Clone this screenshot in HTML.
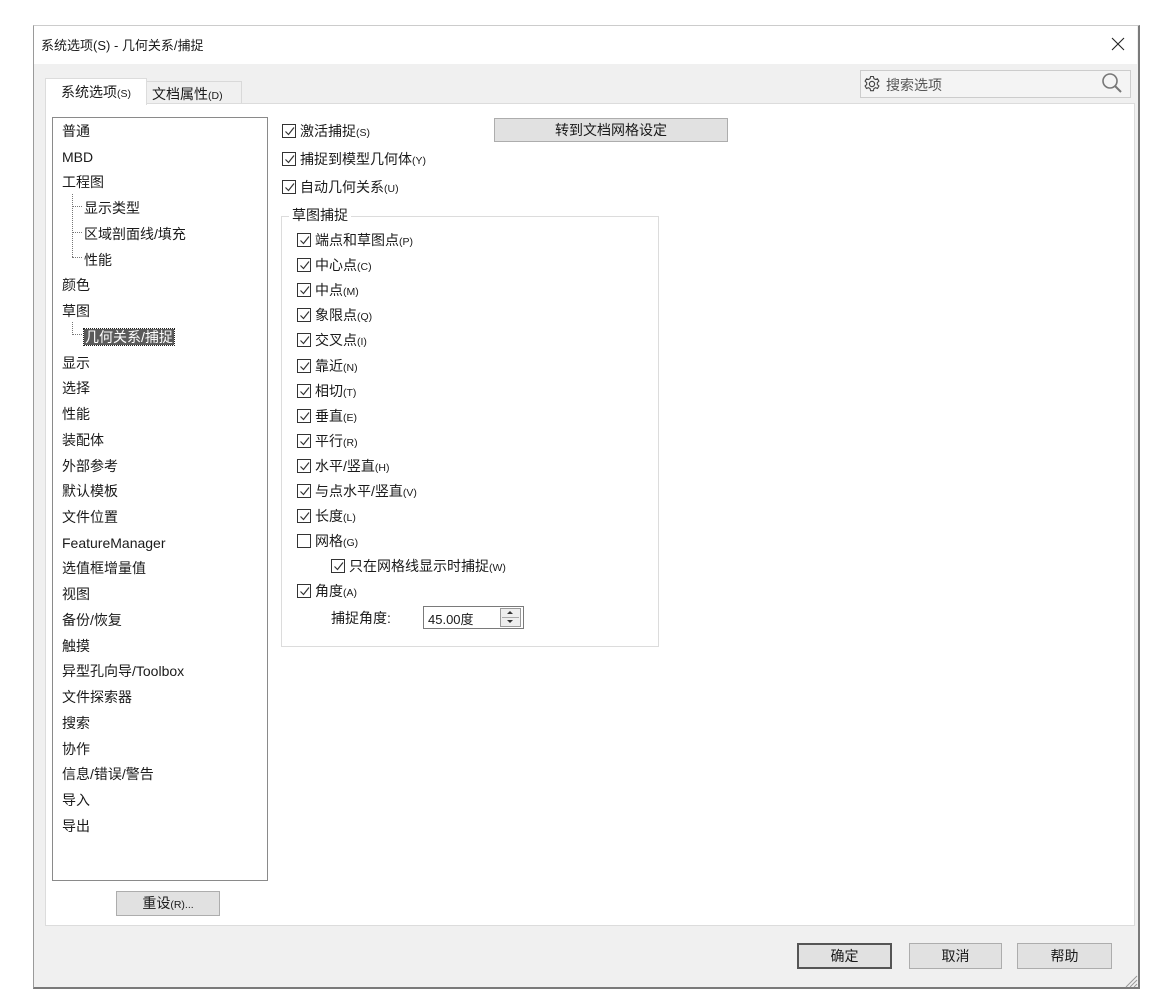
<!DOCTYPE html>
<html><head><meta charset="utf-8"><style>
*{margin:0;padding:0;box-sizing:border-box}
body{width:1165px;height:997px;background:#fff;position:relative;overflow:hidden;font-family:"Liberation Sans","Noto Sans CJK SC",sans-serif;font-size:14px;color:#1a1a1a}
.a{position:absolute;white-space:nowrap}
small{font-size:10.5px}
.cb{position:absolute;width:14px;height:14px;border:1px solid #333;background:#fff}
.cb svg{position:absolute;left:1px;top:1px}
.btn{position:absolute;background:#e1e1e1;border:1px solid #adadad;text-align:center}
</style></head><body>
<div class="a" style="left:33px;top:25px;width:1107px;height:964px;background:#f0f0f0;border-left:1px solid #9a9a9a;border-right:2px solid #7a7a7a;border-bottom:2px solid #7a7a7a;border-top:1px solid #ccc"></div>
<div class="a" style="left:34px;top:26px;width:1103px;height:38px;background:#fff"></div>
<div class="a" style="left:41px;top:35px;font-size:13px">系统选项(S) - 几何关系/捕捉</div>
<svg class="a" style="left:1111px;top:37px" width="14" height="14"><path d="M1 1L13 13M13 1L1 13" stroke="#222" stroke-width="1.1"/></svg>
<div class="a" style="left:860px;top:70px;width:271px;height:28px;border:1px solid #ccc;background:#f4f4f4"></div>
<svg class="a" style="left:863px;top:75px" width="18" height="18" viewBox="0 0 18 18"><circle cx="9" cy="9" r="2.6" fill="none" stroke="#444" stroke-width="1.2"/><path d="M7.6 1.5h2.8l.5 2.1 1.6.9 2-.7 1.4 2.4-1.6 1.5v1.8l1.6 1.5-1.4 2.4-2-.7-1.6.9-.5 2.1H7.6l-.5-2.1-1.6-.9-2 .7-1.4-2.4 1.6-1.5V7.7L2.1 6.2l1.4-2.4 2 .7 1.6-.9z" fill="none" stroke="#444" stroke-width="1.1"/></svg>
<div class="a" style="left:886px;top:75px;color:#555">搜索选项</div>
<svg class="a" style="left:1101px;top:72px" width="22" height="22" viewBox="0 0 22 22"><circle cx="9" cy="9" r="7" fill="none" stroke="#777" stroke-width="1.6"/><path d="M14 14l6 6" stroke="#777" stroke-width="2"/></svg>
<div class="a" style="left:146px;top:81px;width:96px;height:23px;border:1px solid #d9d9d9;border-bottom:none;background:#f0f0f0"></div>
<div class="a" style="left:152px;top:84px">文档属性<small>(D)</small></div>
<div class="a" style="left:45px;top:103px;width:1090px;height:823px;background:#fff;border:1px solid #dcdcdc"></div>
<div class="a" style="left:45px;top:78px;width:102px;height:27px;background:#fff;border:1px solid #dcdcdc;border-bottom:none"></div>
<div class="a" style="left:61px;top:82px">系统选项<small>(S)</small></div>
<div class="a" style="left:52px;top:117px;width:216px;height:764px;border:1px solid #8a8a8a;background:#fff"></div>
<div class="a" style="left:62px;top:119px;line-height:25.74px">普通<br>MBD<br>工程图<br><span style="padding-left:22px">显示类型</span><br><span style="padding-left:22px">区域剖面线/填充</span><br><span style="padding-left:22px">性能</span><br>颜色<br>草图<br><span style="padding-left:22px"><span style="background:#5a5a5a;color:#fff;outline:1px dotted #222;padding:0 1px">几何关系/捕捉</span></span><br>显示<br>选择<br>性能<br>装配体<br>外部参考<br>默认模板<br>文件位置<br>FeatureManager<br>选值框增量值<br>视图<br>备份/恢复<br>触摸<br>异型孔向导/Toolbox<br>文件探索器<br>搜索<br>协作<br>信息/错误/警告<br>导入<br>导出</div>
<div class="a" style="left:72px;top:194px;width:10px;height:63px;border-left:1px dotted #777"></div>
<div class="a" style="left:72px;top:206px;width:10px;border-top:1px dotted #777"></div>
<div class="a" style="left:72px;top:232px;width:10px;border-top:1px dotted #777"></div>
<div class="a" style="left:72px;top:257px;width:10px;border-top:1px dotted #777"></div>
<div class="a" style="left:72px;top:322px;width:10px;height:13px;border-left:1px dotted #777;border-bottom:1px dotted #777"></div>
<div class="btn" style="left:116px;top:891px;width:104px;height:25px;line-height:23px">重设<small>(R)...</small></div>
<div class="btn" style="left:494px;top:118px;width:234px;height:24px;line-height:22px">转到文档网格设定</div>
<div class="a" style="left:281px;top:216px;width:378px;height:431px;border:1px solid #dcdcdc"></div>
<div class="a" style="left:289px;top:205px;background:#fff;padding:0 3px">草图捕捉</div>
<div id="cbs"></div>
<div class="a" style="left:331px;top:608px">捕捉角度:</div>
<div class="a" style="left:423px;top:606px;width:101px;height:23px;border:1px solid #7a7a7a;background:#fff"></div>
<div class="a" style="left:428px;top:609px;font-size:13px">45.00度</div>
<div class="a" style="left:500px;top:608px;width:21px;height:19px;border:1px solid #999;background:#eee"></div>
<div class="a" style="left:502px;top:617px;width:17px;border-top:1px solid #aaa"></div>
<div class="a" style="left:507px;top:611px;border:3px solid transparent;border-bottom:3px solid #333;border-top:none;width:0"></div>
<div class="a" style="left:507px;top:620px;border:3px solid transparent;border-top:3px solid #333;border-bottom:none;width:0"></div>
<div class="btn" style="left:797px;top:943px;width:95px;height:26px;line-height:22px;border:2px solid #555">确定</div>
<div class="btn" style="left:909px;top:943px;width:93px;height:26px;line-height:24px">取消</div>
<div class="btn" style="left:1017px;top:943px;width:95px;height:26px;line-height:24px">帮助</div>
<svg class="a" style="left:1124px;top:974px" width="14" height="14"><path d="M2 13L13 2M6 13L13 6M10 13L13 10" stroke="#999"/></svg>
<script>
var items=[[282,124,1,"激活捕捉","(S)"],[282,152,1,"捕捉到模型几何体","(Y)"],[282,180,1,"自动几何关系","(U)"]];
var l=[["端点和草图点","(P)"],["中心点","(C)"],["中点","(M)"],["象限点","(Q)"],["交叉点","(I)"],["靠近","(N)"],["相切","(T)"],["垂直","(E)"],["平行","(R)"],["水平/竖直","(H)"],["与点水平/竖直","(V)"],["长度","(L)"],["网格","(G)",0],["只在网格线显示时捕捉","(W)",1,1],["角度","(A)"]];
l.forEach(function(e,i){items.push([e[3]?331:297,233+i*25.1,e[2]===0?0:1,e[0],e[1]])});
var h="";items.forEach(function(e){h+='<div class="cb" style="left:'+e[0]+'px;top:'+e[1]+'px">'+(e[2]?'<svg width="11" height="11" viewBox="0 0 11 11"><path d="M1.5 5.5l3 3 5.5-7" fill="none" stroke="#333" stroke-width="1.2"/></svg>':'')+'</div><div class="a" style="left:'+(e[0]+18)+'px;top:'+(e[1]-3)+'px">'+e[3]+'<small>'+e[4]+'</small></div>'});
document.getElementById("cbs").innerHTML=h;
</script>
</body></html>
